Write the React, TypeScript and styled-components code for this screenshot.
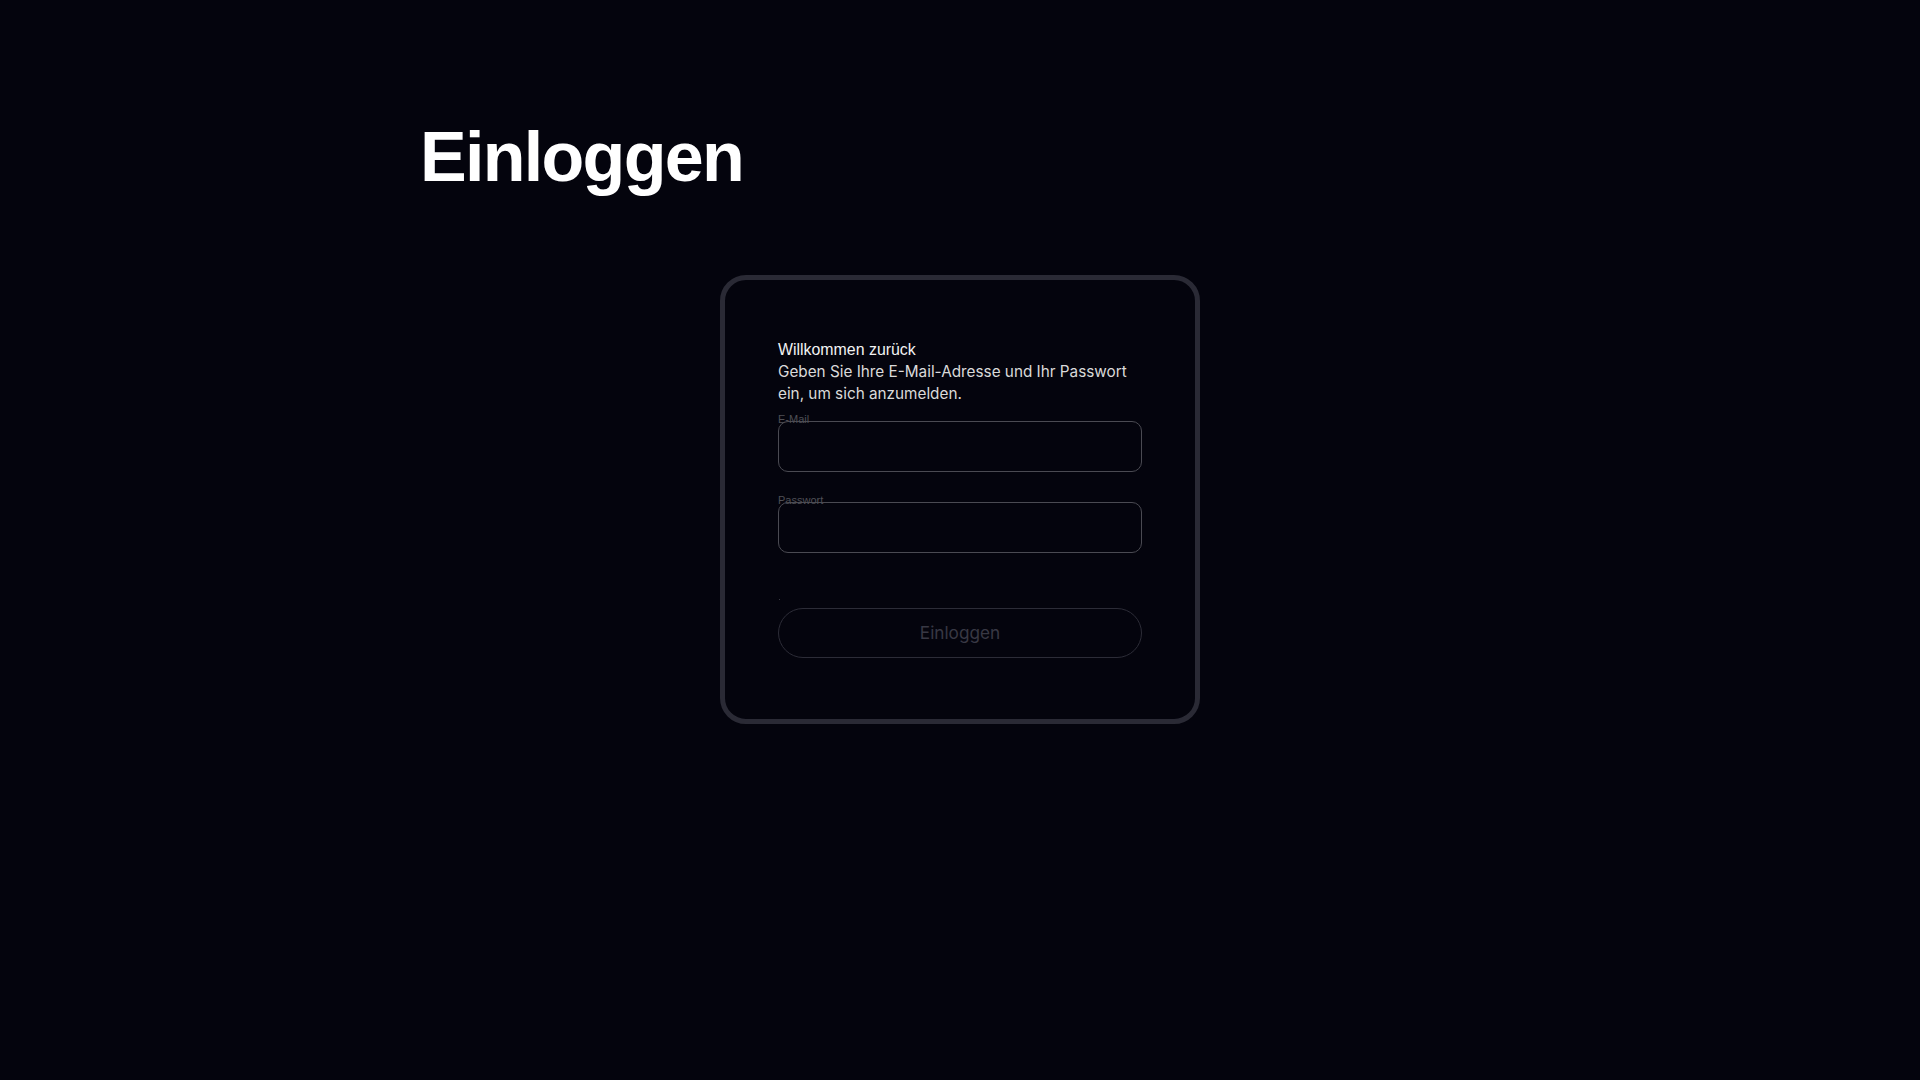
import React from 'react';
import styled, { createGlobalStyle } from 'styled-components';

const GlobalStyle = createGlobalStyle`
  html, body {
    margin: 0;
    padding: 0;
    background: #04040d;
    min-height: 100%;
  }
  body {
    font-family: 'Liberation Sans', Arial, sans-serif;
    color: #ffffff;
  }
  * {
    box-sizing: border-box;
  }
`;

const Page = styled.main`
  width: 1080px;
  margin: 0 auto;
  padding-top: 122px;
  min-height: 1080px;
`;

const Title = styled.h1`
  margin: 0;
  font-family: 'Liberation Sans', Arial, sans-serif;
  font-weight: 700;
  font-size: 70px;
  line-height: 70px;
  letter-spacing: -1.7px;
  color: #ffffff;
`;

const Card = styled.section`
  width: 480px;
  margin: 83px auto 0;
  padding: 61px 53px 61px;
  border: 5px solid #2a2a35;
  border-radius: 26px;
  background: #04040d;
`;

const Welcome = styled.h2`
  margin: 0;
  font-family: 'Liberation Sans', Arial, sans-serif;
  font-weight: 400;
  font-size: 15.9px;
  line-height: 18px;
  color: #f2f2f2;
`;

const Lead = styled.p`
  margin: 2px 0 0;
  font-family: Inter, 'Noto Sans', sans-serif;
  font-size: 15.3px;
  line-height: 21.5px;
  color: #dadada;
`;

const Form = styled.form`
  display: flex;
  flex-direction: column;
  margin-top: 10px;
`;

const Field = styled.div<{ $gap?: number }>`
  display: flex;
  flex-direction: column;
  margin-top: ${(p) => p.$gap ?? 0}px;
`;

const Label = styled.label`
  font-family: 'Liberation Sans', Arial, sans-serif;
  font-size: 11px;
  line-height: 11px;
  color: #4f4f55;
  margin-bottom: -4px;
  position: relative;
`;

const Input = styled.input`
  height: 51px;
  width: 100%;
  border: 1px solid #4a4a52;
  border-radius: 10px;
  background: transparent;
  color: #ffffff;
  padding: 0 14px;
  font-family: Inter, sans-serif;
  font-size: 15px;
  outline: none;
`;

const Hint = styled.div`
  height: 1px;
  width: 1px;
  margin: 46px 0 0 1px;
  background: #3a3a44;
`;

const Submit = styled.button`
  margin-top: 8px;
  height: 50px;
  width: 100%;
  border: 1px solid #2c2c37;
  border-radius: 999px;
  background: transparent;
  font-family: Inter, 'Noto Sans', sans-serif;
  font-size: 17.2px;
  color: #383844;
  cursor: default;
`;

export default function App() {
  return (
    <>
      <GlobalStyle />
      <Page>
        <Title>Einloggen</Title>
        <Card>
          <Welcome>Willkommen zurück</Welcome>
          <Lead>Geben Sie Ihre E-Mail-Adresse und Ihr Passwort ein, um sich anzumelden.</Lead>
          <Form onSubmit={(e) => e.preventDefault()}>
            <Field>
              <Label htmlFor="email">E-Mail</Label>
              <Input id="email" type="email" />
            </Field>
            <Field $gap={22.5}>
              <Label htmlFor="password">Passwort</Label>
              <Input id="password" type="password" />
            </Field>
            <Hint />
            <Submit type="submit" disabled>
              Einloggen
            </Submit>
          </Form>
        </Card>
      </Page>
    </>
  );
}
